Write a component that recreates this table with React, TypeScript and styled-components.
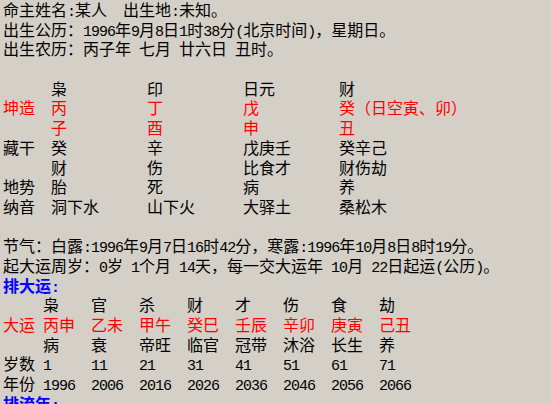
import React from "react";
import styled, { createGlobalStyle } from "styled-components";

const Global = createGlobalStyle`
  html, body { margin: 0; padding: 0; background: #d4d0c8; }
  body { width: 551px; height: 404px; overflow: hidden; }
`;

type Tone = "black" | "red" | "blue";
const toneColor: Record<Tone, string> = { black: "#000000", red: "#ff0000", blue: "#0000ff" };

const ROW = "19.7px";

const Page = styled.div`
  box-sizing: border-box;
  width: 551px;
  height: 404px;
  overflow: hidden;
  padding: 0 0 0 3px;
  background: #d4d0c8;
  color: #000;
  font-family: "Noto Sans CJK SC", sans-serif;
  font-size: 16px;
  line-height: ${ROW};
  white-space: pre;
`;

const Line = styled.div<{ $tone?: Tone; $bold?: boolean }>`
  height: ${ROW};
  color: ${(p) => toneColor[p.$tone ?? "black"]};
  font-weight: ${(p) => (p.$bold ? 700 : 400)};
`;

const Half = styled.span`
  font-family: "Liberation Mono", monospace;
  font-size: 15px;
  letter-spacing: -1px;
`;

const Table = styled.div<{ $label: number; $col: number; $count: number }>`
  display: grid;
  grid-template-columns: ${(p) => `${p.$label}px repeat(${p.$count - 1}, ${p.$col}px) auto`};
  grid-auto-rows: ${ROW};
`;

const Cell = styled.div<{ $tone?: Tone }>`
  color: ${(p) => toneColor[p.$tone ?? "black"]};
  white-space: pre;
`;

const Txt = ({ children }: { children: string }) => {
  const runs = children.match(/[\x00-\x7f]+|[^\x00-\x7f]+/g) ?? [];
  return (
    <>
      {runs.map((r, i) =>
        /^[\x00-\x7f]/.test(r) ? <Half key={i}>{r}</Half> : <React.Fragment key={i}>{r}</React.Fragment>
      )}
    </>
  );
};

type Row = { label: string; labelTone?: Tone; tone?: Tone; cells: string[] };

const pillarRows: Row[] = [
  { label: "", cells: ["枭", "印", "日元", "财"] },
  { label: "坤造", labelTone: "red", tone: "red", cells: ["丙", "丁", "戊", "癸（日空寅、卯）"] },
  { label: "", tone: "red", cells: ["子", "酉", "申", "丑"] },
  { label: "藏干", cells: ["癸", "辛", "戊庚壬", "癸辛己"] },
  { label: "", cells: ["财", "伤", "比食才", "财伤劫"] },
  { label: "地势", cells: ["胎", "死", "病", "养"] },
  { label: "纳音", cells: ["洞下水", "山下火", "大驿土", "桑松木"] },
];

const luckRows: Row[] = [
  { label: "", cells: ["枭", "官", "杀", "财", "才", "伤", "食", "劫"] },
  { label: "大运", labelTone: "red", tone: "red", cells: ["丙申", "乙未", "甲午", "癸巳", "壬辰", "辛卯", "庚寅", "己丑"] },
  { label: "", cells: ["病", "衰", "帝旺", "临官", "冠带", "沐浴", "长生", "养"] },
  { label: "岁数", cells: ["1", "11", "21", "31", "41", "51", "61", "71"] },
  { label: "年份", cells: ["1996", "2006", "2016", "2026", "2036", "2046", "2056", "2066"] },
];

const Grid = ({ rows, label, col }: { rows: Row[]; label: number; col: number }) => (
  <Table $label={label} $col={col} $count={rows[0].cells.length}>
    {rows.map((row, r) => (
      <React.Fragment key={r}>
        <Cell $tone={row.labelTone}>
          <Txt>{row.label}</Txt>
        </Cell>
        {row.cells.map((c, i) => (
          <Cell key={i} $tone={row.tone}>
            <Txt>{c}</Txt>
          </Cell>
        ))}
      </React.Fragment>
    ))}
  </Table>
);

export default function App() {
  return (
    <>
      <Global />
      <Page>
        <Line><Txt>命主姓名:某人  出生地:未知。</Txt></Line>
        <Line><Txt>出生公历：1996年9月8日1时38分(北京时间)，星期日。</Txt></Line>
        <Line><Txt>出生农历：丙子年 七月 廿六日 丑时。</Txt></Line>
        <Line />
        <Grid rows={pillarRows} label={48} col={96} />
        <Line />
        <Line><Txt>节气：白露:1996年9月7日16时42分，寒露:1996年10月8日8时19分。</Txt></Line>
        <Line><Txt>起大运周岁：0岁 1个月 14天，每一交大运年 10月 22日起运(公历)。</Txt></Line>
        <Line $tone="blue" $bold><Txt>排大运:</Txt></Line>
        <Grid rows={luckRows} label={40} col={48} />
        <Line $tone="blue" $bold><Txt>排流年:</Txt></Line>
      </Page>
    </>
  );
}
